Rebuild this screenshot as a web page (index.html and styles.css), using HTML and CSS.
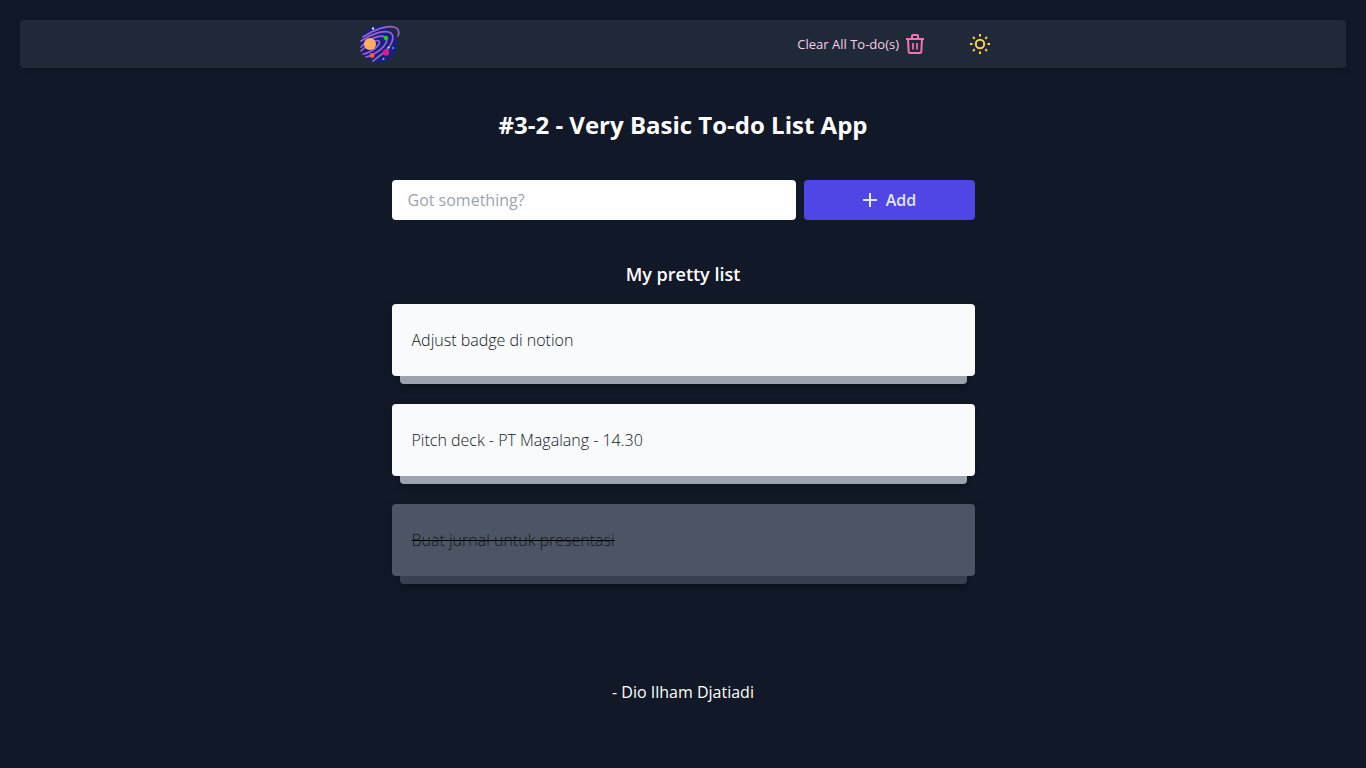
FILE: index.html
```html
<!DOCTYPE html>
<html lang="en">
<head>
<meta charset="utf-8">
<meta name="viewport" content="width=device-width, initial-scale=1">
<title>Very Basic To-do List App</title>
<link rel="stylesheet" href="styles.css">
</head>
<body>
<header class="navbar">
  <div class="navbar-inner">
    <a class="logo" href="#" aria-label="Home">
      <svg width="42" height="40" viewBox="0 0 42 40" fill="none" aria-hidden="true">
        <circle cx="20" cy="20" r="18.5" fill="#17207c"/>
        <g stroke="#9a62cf" stroke-width="1.7" stroke-linecap="round">
          <path d="M4 13C14 6 28 1 35 3C39 4 41 7 39 12"/>
          <path d="M2 17C12 10 26 5 32 9C37 14 31 24 23 30C19 33 17 35 14 37"/>
          <path d="M2 23C9 15 21 10 26 13C30 16 26 22 21 26C17 29 12 32 7 33"/>
          <path d="M2 27C8 21 16 15 20 17C22 19 18 23 14 26C10 28 7 30 4 30"/>
        </g>
        <circle cx="11" cy="20" r="6" fill="#ffb163"/>
        <path d="M6 18h9M7 23h8" stroke="#ffa25c"/>
        <circle cx="27" cy="14" r="2.2" fill="#20d020"/>
        <circle cx="27" cy="28.5" r="3.2" fill="#d81b88"/>
        <circle cx="13" cy="31.5" r="2.4" fill="#ff6030"/>
        <circle cx="14" cy="4.5" r="1.2" fill="#a5f0d0"/>
        <circle cx="29.5" cy="23.5" r="1" fill="#ffd98a"/>
        <circle cx="34" cy="24" r="1.2" fill="#4a7de0"/>
        <circle cx="24.5" cy="35" r="1" fill="#8db8f0"/>
      </svg>
    </a>
    <div class="actions">
      <button class="clear" type="button">Clear All To-do(s)
        <svg width="20" height="22" viewBox="0 0 20 22" fill="none" stroke="currentColor" stroke-width="2" stroke-linejoin="round" aria-hidden="true">
          <path d="M1 6h18M7 6V3Q7 2 8 2h4q1 0 1 1v3M3 6l.7 13q.1 1 1.3 1h10q1.2 0 1.3-1L17 6"/>
          <path d="M8 10v6.500M12 10v6.500" stroke-width="1.7"/>
        </svg>
      </button>
      <button class="theme" type="button" aria-label="Toggle theme">
        <svg width="22" height="22" viewBox="0 0 22 22" fill="none" stroke="currentColor" stroke-width="2" aria-hidden="true">
          <circle cx="11" cy="11" r="4.2"/>
          <path d="M11 1v2.500M11 18.500V21M1 11h2.500M18.500 11H21M4 4l1.700 1.700M16.300 16.300L18 18M4 18l1.700-1.700M16.300 5.700L18 4"/>
        </svg>
      </button>
    </div>
  </div>
</header>
<main class="content">
  <h1 class="title">#3-2 - Very Basic To-do List App</h1>
  <form class="add-form">
    <input class="field" type="text" placeholder="Got something?" aria-label="New to-do">
    <button class="add" type="button">
      <svg width="16" height="16" viewBox="0 0 16 16" fill="none" stroke="currentColor" stroke-width="2" aria-hidden="true"><path d="M8 1v14M1 8h14"/></svg>
      Add
    </button>
  </form>
  <h2 class="subtitle">My pretty list</h2>
  <ul class="list">
    <li class="item"><p class="card">Adjust badge di notion</p></li>
    <li class="item"><p class="card">Pitch deck - PT Magalang - 14.30</p></li>
    <li class="item done"><p class="card"><s>Buat jurnal untuk presentasi</s></p></li>
  </ul>
</main>
<footer class="footer">- Dio Ilham Djatiadi</footer>
</body>
</html>
```
FILE: styles.css
```css
* {
  box-sizing: border-box;
}

body {
  margin: 0;
  padding: 20px;
  background: #111827;
  color: #fff;
  font: 16px/24px "Segoe UI", "Open Sans", "Noto Sans", sans-serif;
}

h1, h2, p, ul {
  margin: 0;
  padding: 0;
}

button, input {
  border: 0;
  font: inherit;
}

button {
  display: flex;
  align-items: center;
  background: none;
  cursor: pointer;
}

svg {
  display: block;
}

.navbar {
  padding: 4px 16px;
  border-radius: 4px;
  background: #1f2937;
  box-shadow: 0 4px 6px rgba(0, 0, 0, 0.1);
}

.navbar-inner {
  display: flex;
  align-items: center;
  justify-content: space-between;
  max-width: 648px;
  margin: 0 auto;
}

.actions {
  display: flex;
  align-items: center;
  gap: 28px;
}

.clear {
  gap: 6px;
  padding: 0;
  color: #fbcfe8;
  font-size: 13px;
}

.clear svg {
  color: #f472b6;
}

.theme {
  padding: 8px 16px;
  color: #fcd34d;
}

.content {
  max-width: 583px;
  margin: 0 auto;
  padding-top: 40px;
}

.title {
  font-size: 24px;
  line-height: 34px;
  font-weight: 700;
  text-align: center;
}

.add-form {
  display: flex;
  gap: 8px;
  margin-top: 38px;
}

.field {
  flex: 1;
  min-width: 0;
  height: 40px;
  padding: 0 16px;
  border-radius: 4px;
  background: #fff;
  color: #111827;
}

.field::placeholder {
  color: #9ca3af;
  opacity: 1;
}

.add {
  flex: 0 0 171px;
  justify-content: center;
  gap: 8px;
  height: 40px;
  border-radius: 4px;
  background: #4f46e5;
  color: #e0e7ff;
  font-weight: 600;
}

.subtitle {
  margin-top: 40px;
  font-size: 18px;
  line-height: 28px;
  font-weight: 600;
  text-align: center;
}

.list {
  display: grid;
  gap: 20px;
  margin-top: 16px;
  list-style: none;
}

.item {
  position: relative;
  padding-bottom: 8px;
}

.item::before {
  content: "";
  position: absolute;
  inset: 8px 8px 0;
  border-radius: 4px;
  background: #9ca3af;
  box-shadow: 0 4px 6px rgba(0, 0, 0, 0.25);
}

.card {
  position: relative;
  padding: 24px 20px;
  border-radius: 4px;
  background: #f9fafb;
  color: #111827;
  font-weight: 300;
  box-shadow: 0 1px 8px rgba(0, 0, 0, 0.2);
  clip-path: inset(-8px -8px 0);
}

.done::before {
  background: #374151;
}

.done .card {
  background: #4b5563;
}

.done s {
  text-decoration-color: #000;
}

.footer {
  margin-top: 96px;
  text-align: center;
}
```
